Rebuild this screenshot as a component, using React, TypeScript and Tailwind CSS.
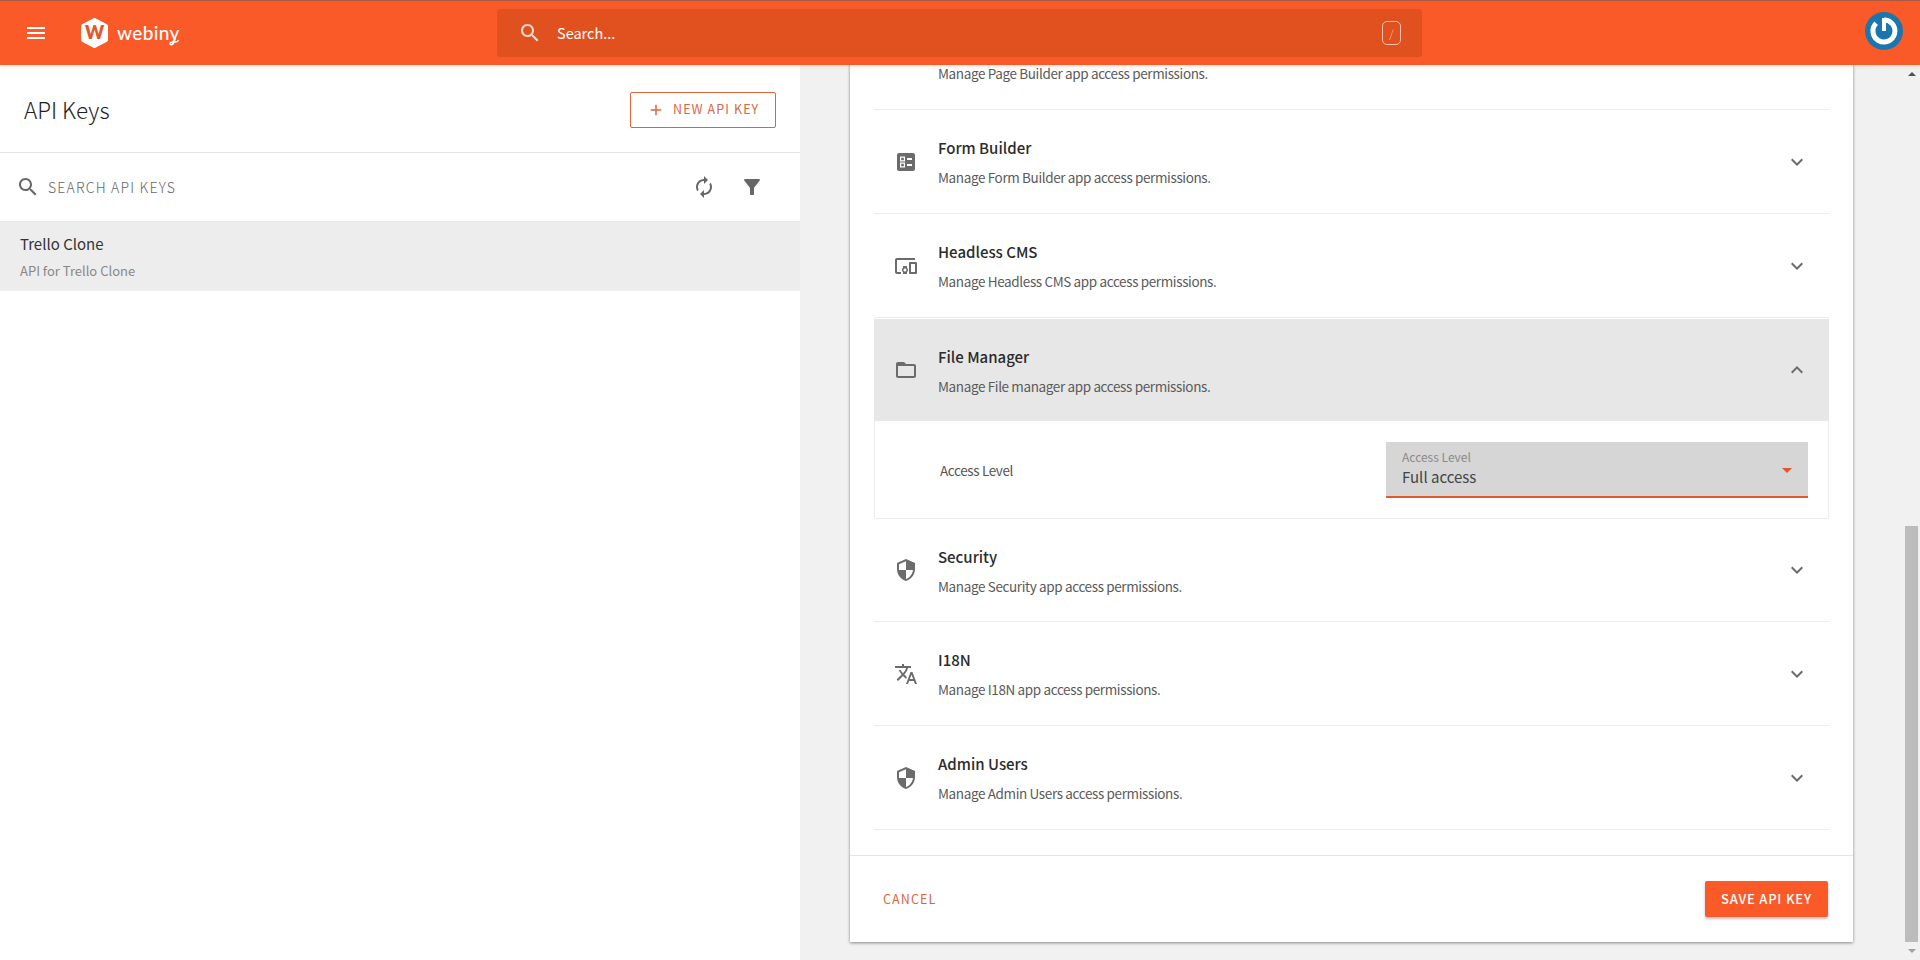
import React from "react";

const icons = {
  menu: "M3 18h18v-2H3v2zm0-5h18v-2H3v2zm0-7v2h18V6H3z",
  search:
    "M15.5 14h-.79l-.28-.27C15.41 12.59 16 11.11 16 9.5 16 5.91 13.09 3 9.5 3S3 5.91 3 9.5 5.91 16 9.5 16c1.61 0 3.09-.59 4.23-1.57l.27.28v.79l5 4.99L20.49 19l-4.99-5zm-6 0C7.01 14 5 11.99 5 9.5S7.01 5 9.5 5 14 7.01 14 9.5 11.99 14 9.5 14z",
  refresh:
    "M12 6v3l4-4-4-4v3c-4.42 0-8 3.58-8 8 0 1.57.46 3.03 1.24 4.26L6.7 14.8c-.45-.83-.7-1.79-.7-2.8 0-3.31 2.69-6 6-6zm6.76 1.74L17.3 9.2c.44.84.7 1.79.7 2.8 0 3.31-2.69 6-6 6v-3l-4 4 4 4v-3c4.42 0 8-3.58 8-8 0-1.57-.46-3.03-1.24-4.26z",
  filter:
    "M4.25 5.61C6.27 8.2 10 13 10 13v6c0 .55.45 1 1 1h2c.55 0 1-.45 1-1v-6s3.72-4.8 5.74-7.39c.51-.66.04-1.61-.79-1.61H5.04c-.83 0-1.3.95-.79 1.61z",
  plus: "M19 13h-6v6h-2v-6H5v-2h6V5h2v6h6v2z",
  more: "M16.59 8.59L12 13.17 7.41 8.59 6 10l6 6 6-6z",
  less: "M12 8l-6 6 1.41 1.41L12 10.83l4.59 4.58L18 14z",
  web: "M20 2H4c-1.1 0-1.99.9-1.99 2L2 16c0 1.1.9 2 2 2h16c1.1 0 2-.9 2-2V4c0-1.1-.9-2-2-2zm-5 14H4v-4h11v4zm0-5H4V7h11v4zm5 5h-4V7h4v9z",
  form: "M19 3H5c-1.1 0-2 .9-2 2v14c0 1.1.9 2 2 2h14c1.1 0 2-.9 2-2V5c0-1.1-.9-2-2-2zm-8 8.5H6V6.5h5v5zm-1.2-3.8H7.2v2.6h2.6V7.7zM18 10h-5V8h5v2zm-7 7.5H6v-5h5v5zm-1.2-3.8H7.2v2.6h2.6v-2.6zM18 16h-5v-2h5v2z",
  devices:
    "M3 6h18V4H3c-1.1 0-2 .9-2 2v12c0 1.1.9 2 2 2h4v-2H3V6zm10 6H9v1.78c-.61.55-1 1.33-1 2.22s.39 1.67 1 2.22V20h4v-1.78c.61-.55 1-1.34 1-2.22s-.39-1.67-1-2.22V12zm-2 5.5c-.83 0-1.5-.67-1.5-1.5s.67-1.5 1.5-1.5 1.5.67 1.5 1.5-.67 1.5-1.5 1.5zM22 8h-6c-.5 0-1 .5-1 1v10c0 .5.5 1 1 1h6c.5 0 1-.5 1-1V9c0-.5-.5-1-1-1zm-1 10h-4v-8h4v8z",
  folder:
    "M20 6h-8l-2-2H4c-1.1 0-1.99.9-1.99 2L2 18c0 1.1.9 2 2 2h16c1.1 0 2-.9 2-2V8c0-1.1-.9-2-2-2zm0 12H4V8h16v10z",
  security:
    "M12 1L3 5v6c0 5.55 3.84 10.74 9 12 5.16-1.26 9-6.45 9-12V5l-9-4zm0 10.99h7c-.53 4.12-3.28 7.79-7 8.94V12H5V6.3l7-3.11v8.8z",
  translate:
    "M12.87 15.07l-2.54-2.51.03-.03c1.74-1.94 2.98-4.17 3.71-6.53H17V4h-7V2H8v2H1v1.99h11.17C11.5 7.92 10.44 9.75 9 11.35 8.07 10.32 7.3 9.19 6.69 8h-2c.73 1.63 1.73 3.17 2.98 4.56l-5.09 5.02L4 19l5-5 3.11 3.11.76-2.04zM18.5 10h-2L12 22h2l1.12-3h4.75L21 22h2l-4.5-12zm-2.62 7l1.62-4.33L19.12 17h-3.24z",
};

function Icon({ d, className }: { d: string; className?: string }) {
  return (
    <svg viewBox="0 0 24 24" fill="currentColor" className={className}>
      <path d={d} />
    </svg>
  );
}

function Logo() {
  return (
    <div className="flex items-center ml-[33px] gap-[9px]">
      <svg viewBox="0 0 27 30" className="w-[27px] h-[30px]">
        <polygon
          points="13.5,2 25,8 25,22 13.5,28 2,22 2,8"
          fill="#ffffff"
          stroke="#ffffff"
          strokeWidth="4"
          strokeLinejoin="round"
        />
        <text
          x="13.5"
          y="21"
          textAnchor="middle"
          fontSize="18"
          fontWeight="800"
          fill="#e0592a"
          fontFamily="Lato, sans-serif"
        >
          W
        </text>
      </svg>
      <div className="relative">
        <span className="block text-white text-[19px] leading-[24px] font-['Lato',sans-serif] font-medium tracking-[0.4px]">
          webiny
        </span>
        <svg
          viewBox="0 0 12 10"
          className="absolute left-[51px] top-[16px] w-[12px] h-[10px]"
          fill="none"
          stroke="#ffffff"
          strokeWidth="1.5"
        >
          <path d="M7 1C7 6 4 8.5 2.5 7.5C1 6.5 3 4.5 6 5C8 5.3 10 4.5 10.5 3" />
        </svg>
      </div>
    </div>
  );
}

function Header() {
  return (
    <header className="relative z-10 h-[65px] shrink-0 flex items-center bg-[#fa5a28] border-t border-[#a8583f] shadow-[0_2px_3px_rgba(250,90,40,0.15)]">
      <div className="w-[497px] flex items-center pl-[24px] shrink-0">
        <Icon d={icons.menu} className="w-6 h-6 text-white" />
        <Logo />
      </div>
      <div className="w-[925px] h-[48px] rounded-[3px] bg-[#e0511f] flex items-center pl-[21px] pr-[21px]">
        <Icon d={icons.search} className="w-6 h-6 text-[#f8dcd0]" />
        <span className="ml-[15px] text-white text-[14.5px] leading-[24px]">Search...</span>
        <div className="ml-auto w-[19px] h-[24px] rounded-[5px] border border-[#f5c4ae] flex items-center justify-center text-[#f5c4ae] text-[11px] font-light">
          /
        </div>
      </div>
      <div className="ml-auto mr-[17px] -mt-[4px]">
        <svg viewBox="0 0 38 38" className="w-[38px] h-[38px]">
          <circle cx="19" cy="19" r="19" fill="#1b75ae" />
          <path
            d="M19 8A11 11 0 1 1 11.2 11.2"
            fill="none"
            stroke="#ffffff"
            strokeWidth="5"
          />
          <path d="M19 6V19" fill="none" stroke="#ffffff" strokeWidth="4" />
        </svg>
      </div>
    </header>
  );
}

function Sidebar() {
  return (
    <aside className="w-[800px] shrink-0 bg-white">
      <div className="h-[88px] pt-[2px] flex items-center justify-between border-b border-[#e4e4e4] pl-[24px] pr-[24px]">
        <h1 className="text-[22.5px] leading-[32px] -mt-[2px] font-light text-[#1f1f1f]">API Keys</h1>
        <button className="w-[146px] h-[36px] rounded-[2px] border border-[#e0643a] flex items-center pl-[16px] text-[#d9673f] text-[12.5px] tracking-[1.1px]">
          <Icon d={icons.plus} className="w-[18px] h-[18px] mr-[8px]" />
          NEW API KEY
        </button>
      </div>
      <div className="h-[69px] flex items-center border-b border-[#e8e8e8] pl-[16px]">
        <Icon d={icons.search} className="w-6 h-6 text-[#666666]" />
        <span className="ml-[8px] text-[14px] font-light tracking-[1.2px] text-[#666666]">SEARCH API KEYS</span>
        <Icon d={icons.refresh} className="w-6 h-6 text-[#666666] ml-auto" />
        <Icon d={icons.filter} className="w-6 h-6 text-[#666666] ml-[24px] mr-[36px]" />
      </div>
      <div className="h-[69px] bg-[#ededed] border-b border-[#f0f0f0] pl-[20px] pt-[10px]">
        <div className="text-[15px] leading-[24px] text-[#333333]">Trello Clone</div>
        <div className="text-[13px] leading-[20px] mt-[5px] text-[#888888]">API for Trello Clone</div>
      </div>
    </aside>
  );
}

function RowText({ title, desc }: { title: string; desc: string }) {
  return (
    <div className="ml-[20px] pt-[1px]">
      <div className="text-[15px] leading-[22px] font-medium text-[#2b2b2b]">{title}</div>
      <div className="text-[13.5px] leading-[20px] mt-[8px] tracking-[-0.37px] text-[#5a5a5a]">{desc}</div>
    </div>
  );
}

const permissions = [
  { title: "Form Builder", desc: "Manage Form Builder app access permissions.", icon: icons.form },
  { title: "Headless CMS", desc: "Manage Headless CMS app access permissions.", icon: icons.devices },
];

const permissionsAfter = [
  { title: "I18N", desc: "Manage I18N app access permissions.", icon: icons.translate },
  { title: "Admin Users", desc: "Manage Admin Users access permissions.", icon: icons.security },
];

function Row({ title, desc, icon }: { title: string; desc: string; icon: string }) {
  return (
    <div className="h-[104px] border-b border-[#ececec] flex items-center pl-[20px] pr-[20px]">
      <Icon d={icon} className="w-6 h-6 text-[#6b6b6b] shrink-0" />
      <RowText title={title} desc={desc} />
      <Icon d={icons.more} className="w-6 h-6 text-[#6b6b6b] ml-auto" />
    </div>
  );
}

function FileManager() {
  return (
    <div>
      <div className="h-[103px] bg-[#e7e7e7] border-t border-white flex items-center pl-[20px] pr-[20px]">
        <Icon d={icons.folder} className="w-6 h-6 text-[#6b6b6b] shrink-0" />
        <RowText title="File Manager" desc="Manage File manager app access permissions." />
        <Icon d={icons.less} className="w-6 h-6 text-[#6b6b6b] ml-auto" />
      </div>
      <div className="h-[98px] border border-t-0 border-[#ececec] flex items-start pt-[21px] pl-[65px] pr-[20px]">
        <div className="mt-[18px] text-[13.5px] leading-[20px] tracking-[-0.37px] text-[#555555]">Access Level</div>
        <div className="relative ml-auto w-[422px] h-[56px] bg-[#d6d6d6] border-b-2 border-[#e0592a] pl-[16px] pt-[6px]">
          <div className="text-[12px] leading-[18px] text-[#8a8a8a]">Access Level</div>
          <div className="text-[15px] leading-[22px] text-[#444444]">Full access</div>
          <div className="absolute right-[16px] top-[26px] w-0 h-0 border-x-[5px] border-x-transparent border-t-[5px] border-t-[#e0592a]" />
        </div>
      </div>
    </div>
  );
}

function FormCard() {
  return (
    <div className="bg-white shadow-[0_1px_3px_rgba(0,0,0,0.45)] shrink-0">
      <div className="pl-[24px] pr-[24px] pb-[25px]">
        <Row title="Page Builder" desc="Manage Page Builder app access permissions." icon={icons.web} />
        {permissions.map((p) => (
          <Row key={p.title} {...p} />
        ))}
        <FileManager />
        <div className="h-[103px] border-b border-[#ececec] flex items-center pl-[20px] pr-[20px]">
          <Icon d={icons.security} className="w-6 h-6 text-[#6b6b6b] shrink-0" />
          <RowText title="Security" desc="Manage Security app access permissions." />
          <Icon d={icons.more} className="w-6 h-6 text-[#6b6b6b] ml-auto" />
        </div>
        {permissionsAfter.map((p) => (
          <Row key={p.title} {...p} />
        ))}
      </div>
      <div className="h-[87px] border-t border-[#e4e4e4] flex items-center justify-between pl-[33px] pr-[25px]">
        <button className="text-[12.5px] tracking-[1.1px] text-[#d9673f]">CANCEL</button>
        <button className="w-[123px] h-[36px] rounded-[2px] bg-[#fa5a28] text-[13px] font-medium tracking-[0.8px] text-white shadow-[0_2px_3px_rgba(0,0,0,0.25)]">
          SAVE API KEY
        </button>
      </div>
    </div>
  );
}

function Scrollbar() {
  return (
    <div className="w-[15px] shrink-0 flex flex-col items-start">
      <div className="h-[18px] w-[13px] flex items-center justify-center">
        <div className="w-0 h-0 border-x-[4px] border-x-transparent border-b-[4px] border-b-[#505050]" />
      </div>
      <div className="flex-1" />
      <div className="h-[416px] w-[13px] bg-[#bcbcbc]" />
      <div className="h-[18px] w-[13px] flex items-center justify-center">
        <div className="w-0 h-0 border-x-[4px] border-x-transparent border-t-[4px] border-t-[#a0a0a0]" />
      </div>
    </div>
  );
}

export default function App() {
  return (
    <div className="h-screen flex flex-col overflow-hidden font-['Noto_Sans_CJK_SC','Lato',sans-serif]">
      <Header />
      <div className="flex flex-1 min-h-0">
        <Sidebar />
        <main className="flex-1 flex bg-[#f1f1f1] min-w-0">
          <div className="flex-1 flex flex-col justify-end overflow-hidden pl-[50px] pr-[52px] pb-[18px]">
            <FormCard />
          </div>
          <Scrollbar />
        </main>
      </div>
    </div>
  );
}
